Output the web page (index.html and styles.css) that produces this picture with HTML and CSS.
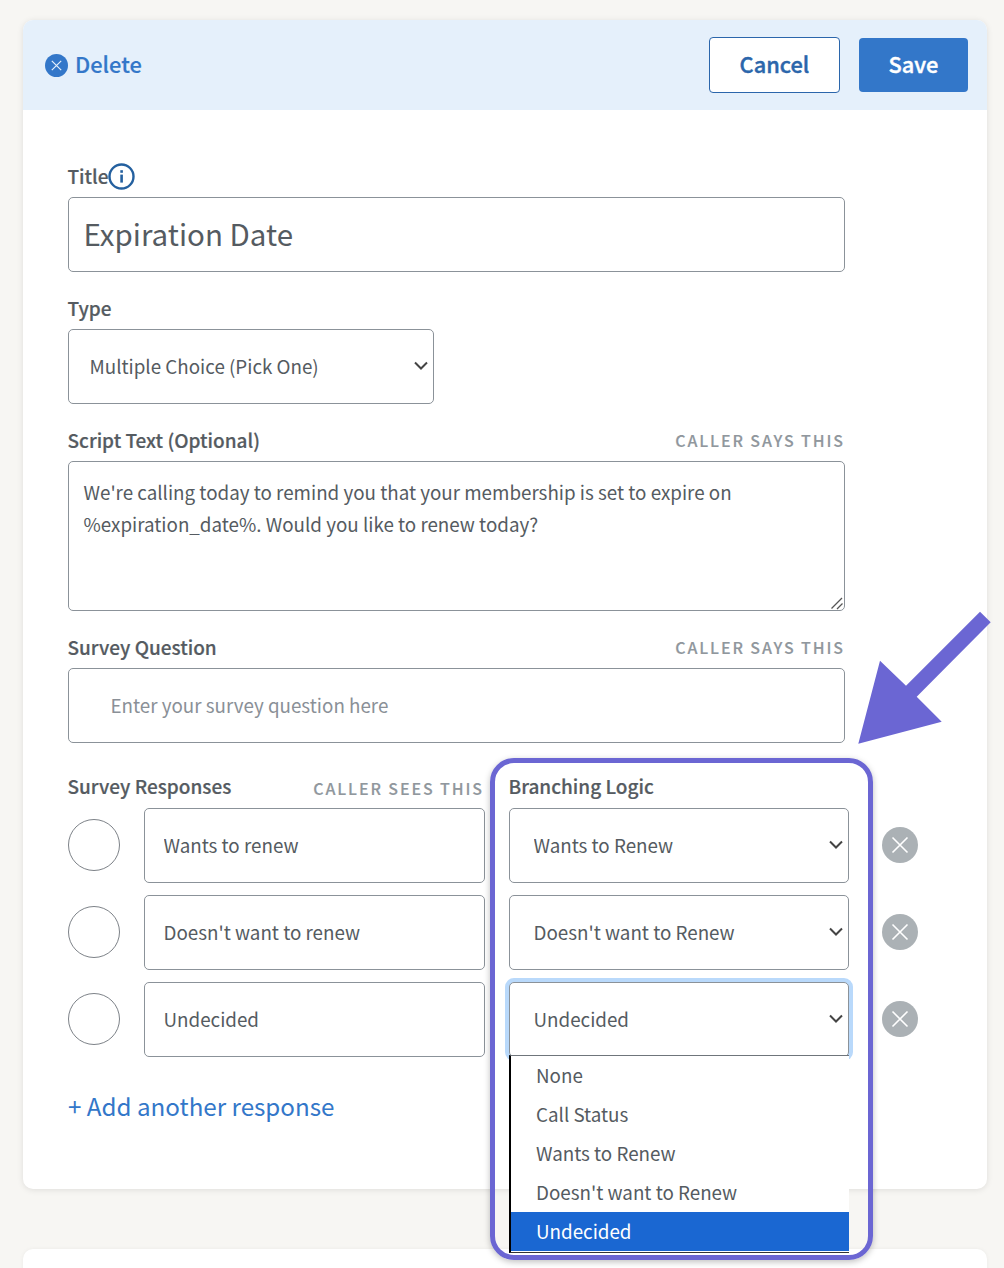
FILE: index.html
```html
<!DOCTYPE html>
<html lang="en">
<head>
<meta charset="utf-8">
<title>Survey question editor</title>
<link rel="stylesheet" href="styles.css">
</head>
<body>
<main class="card">
  <header class="bar">
    <a class="delete" href="#">
      <svg class="delete-icon" viewBox="0 0 23 23" aria-hidden="true"><circle cx="11.5" cy="11.5" r="11.5" fill="#3377c9"/><path d="M6.8 6.8l9.4 9.4M16.2 6.8l-9.4 9.4" stroke="#e5f0fb" stroke-width="1.2" fill="none"/></svg>
      <span class="delete-text">Delete</span>
    </a>
    <div class="actions">
      <button class="btn btn-outline" type="button">Cancel</button>
      <button class="btn btn-solid" type="button">Save</button>
    </div>
  </header>

  <form class="form">
    <div class="label-row">
      <label class="label">Title</label>
      <svg class="info" viewBox="0 0 27 27" aria-hidden="true"><circle cx="13.5" cy="13.5" r="12" fill="#fff" stroke="#24609f" stroke-width="2.4"/><rect x="12.300" y="11.600" width="2.600" height="8" fill="#24609f"/><rect x="12.300" y="7.200" width="2.600" height="2.600" fill="#24609f"/></svg>
    </div>
    <input class="field field-title" type="text" value="Expiration Date">

    <div class="label-row"><label class="label">Type</label></div>
    <select class="field field-type">
      <option>Multiple Choice (Pick One)</option>
    </select>

    <div class="label-row label-between"><label class="label">Script Text (Optional)</label><span class="hint">CALLER SAYS THIS</span></div>
    <div class="script-wrap">
      <textarea class="field field-script">We're calling today to remind you that your membership is set to expire on %expiration_date%. Would you like to renew today?</textarea>
      <svg class="grip" viewBox="0 0 14 14" aria-hidden="true"><path d="M1.500 12.500L12 2M7 13l5.500-5.500" stroke="#555" stroke-width="1.300" fill="none"/></svg>
    </div>

    <div class="label-row label-between"><label class="label">Survey Question</label><span class="hint">CALLER SAYS THIS</span></div>
    <input class="field field-question" type="text" placeholder="Enter your survey question here">

    <div class="responses">
      <div class="responses-head">
        <div class="label-row label-between col-response"><label class="label">Survey Responses</label><span class="hint hint-low">CALLER SEES THIS</span></div>
        <div class="label-row col-logic"><label class="label">Branching Logic</label></div>
      </div>

      <div class="response">
        <span class="radio"></span>
        <input class="field field-response" type="text" value="Wants to renew">
        <select class="field field-logic"><option>Wants to Renew</option></select>
        <span class="remove"><svg viewBox="0 0 36 36" aria-hidden="true"><path d="M10.500 10.500l15 15M25.500 10.500l-15 15" stroke="#fff" stroke-width="1.600" fill="none"/></svg></span>
      </div>
      <div class="response">
        <span class="radio"></span>
        <input class="field field-response" type="text" value="Doesn't want to renew">
        <select class="field field-logic"><option>Doesn't want to Renew</option></select>
        <span class="remove"><svg viewBox="0 0 36 36" aria-hidden="true"><path d="M10.500 10.500l15 15M25.500 10.500l-15 15" stroke="#fff" stroke-width="1.600" fill="none"/></svg></span>
      </div>
      <div class="response">
        <span class="radio"></span>
        <input class="field field-response" type="text" value="Undecided">
        <div class="logic-open">
          <select class="field field-logic field-focus"><option>Undecided</option></select>
          <ul class="menu">
            <li>None</li>
            <li>Call Status</li>
            <li>Wants to Renew</li>
            <li>Doesn't want to Renew</li>
            <li class="menu-selected">Undecided</li>
          </ul>
        </div>
        <span class="remove"><svg viewBox="0 0 36 36" aria-hidden="true"><path d="M10.500 10.500l15 15M25.500 10.500l-15 15" stroke="#fff" stroke-width="1.600" fill="none"/></svg></span>
      </div>
    </div>

    <a class="add" href="#">+ Add another response</a>
  </form>
</main>
<div class="card-next"></div>

<div class="highlight"></div>
<svg class="arrow" viewBox="0 0 134 134" aria-hidden="true"><path d="M122 .7L132.700 11.300 58.700 85.700 83.700 110.700 .3 132.700 22 49.700 48 74.700z" fill="#6b66d3"/></svg>
</body>
</html>
```
FILE: styles.css
```css
* { box-sizing: border-box; }
html, body { height: 100%; }
body {
  margin: 0;
  padding: 20px 17px 0 23px;
  background: #f7f6f3;
  font-family: "Noto Sans CJK JP", "Source Sans Pro", sans-serif;
  color: #555b61;
  overflow: hidden;
  position: relative;
}
.card {
  height: 1169px;
  background: #fff;
  border-radius: 10px;
  box-shadow: 0 1px 6px rgba(0, 0, 0, .1);
}
.card-next {
  height: 40px;
  margin-top: 60px;
  background: #fff;
  border-radius: 10px 10px 0 0;
  box-shadow: 0 0 4px rgba(0, 0, 0, .05);
}
.bar {
  height: 90px;
  padding: 0 19px 0 22px;
  display: flex;
  align-items: center;
  justify-content: space-between;
  background: #e5f0fb;
  border-radius: 10px 10px 0 0;
}
.delete {
  display: flex;
  align-items: center;
  gap: 7px;
  color: #3377c9;
  text-decoration: none;
  font-size: 21.800px;
  font-weight: 500;
  line-height: 30px;
  -webkit-text-stroke: .2px #3377c9;
}
.delete-text { padding-bottom: 3px; }
.delete-icon { width: 23px; height: 23px; }
.actions { display: flex; gap: 19px; align-items: center; }
.btn {
  font: inherit;
  font-size: 21.800px;
  font-weight: 500;
  line-height: 30px;
  border-radius: 4px;
  padding: 0 0 3px;
  -webkit-text-stroke: .4px currentColor;
}
.btn-outline {
  width: 131px;
  height: 56px;
  background: #fff;
  color: #2b66ab;
  border: 1px solid #2b66ab;
}
.btn-solid {
  width: 109px;
  height: 54px;
  background: #3377c9;
  color: #fff;
  border: 0;
}
.form { padding: 54px 0 0 45px; width: 822px; position: relative; }
.label-row {
  display: flex;
  align-items: center;
  height: 26px;
  margin-bottom: 7px;
}
.label-between { justify-content: space-between; }
.label {
  font-size: 19px;
  font-weight: 500;
  line-height: 26px;
  color: #555b61;
  padding-bottom: 2px;
  margin-left: -.5px;
  -webkit-text-stroke: .2px #555b61;
}
.info { width: 27px; height: 27px; margin-left: -1px; margin-top: -1px; }
.hint {
  font-size: 16px;
  font-weight: 500;
  line-height: 22px;
  letter-spacing: 1.900px;
  color: #90979d;
  padding-bottom: 2px;
  -webkit-text-stroke: .15px #90979d;
}
.hint-low { padding-bottom: 0; padding-top: 1px; }
.field {
  display: block;
  font: inherit;
  color: #555b61;
  background: #fff;
  border: 1px solid #8b9299;
  border-radius: 5px;
  outline: none;
}
select.field {
  appearance: none;
  -webkit-appearance: none;
  background: #fff url("data:image/svg+xml,%3Csvg xmlns='http://www.w3.org/2000/svg' width='14' height='9' viewBox='0 0 14 9'%3E%3Cpath d='M1 1.500l6 6 6-6' fill='none' stroke='%23444' stroke-width='2'/%3E%3C/svg%3E") no-repeat right 5px top 31px;
}
.field-title {
  width: 777px;
  height: 75px;
  padding: 0 15px 4px 14.500px;
  font-size: 29.500px;
  margin-bottom: 24px;
}
.field-type {
  width: 366px;
  height: 75px;
  padding: 0 21px 2px 20.500px;
  font-size: 18.800px;
  margin-bottom: 24px;
}
.script-wrap {
  position: relative;
  width: 777px;
  height: 150px;
  margin-bottom: 24px;
}
.field-script {
  width: 777px;
  height: 150px;
  padding: 14px 15px 16px 14.500px;
  font-size: 18.800px;
  line-height: 32px;
  resize: none;
}
.grip {
  position: absolute;
  right: 1px;
  bottom: 1px;
  width: 14px;
  height: 14px;
}
.field-question {
  width: 777px;
  height: 75px;
  padding: 0 42px 2px 41.500px;
  font-size: 18.800px;
  margin-bottom: 31px;
}
.field-question::placeholder { color: #8a9097; opacity: 1; }
.responses { width: 850px; }
.responses-head { display: flex; }
.col-response { width: 416px; margin-bottom: 8px; }
.col-logic { margin-left: 25px; margin-bottom: 8px; }
.response {
  display: flex;
  align-items: center;
  height: 75px;
  margin-bottom: 12px;
}
.radio {
  width: 52px;
  height: 52px;
  border: 1px solid #7d8288;
  border-radius: 50%;
  flex: none;
  margin: 0 24px 2px 0;
}
.field-response {
  width: 341px;
  height: 75px;
  padding: 0 19px 2px 18.500px;
  font-size: 18.800px;
  flex: none;
  margin-right: 24px;
}
.field-logic {
  width: 340px;
  height: 75px;
  padding: 0 24px 2px 23.500px;
  font-size: 18.800px;
  flex: none;
}
.logic-open { position: relative; width: 340px; height: 75px; flex: none; }
.field-focus { box-shadow: 0 0 0 4px #b9d9fb; }
.menu {
  position: absolute;
  left: 0;
  top: 73px;
  width: 340px;
  margin: 0;
  padding: 0 0 1px;
  list-style: none;
  background: #fff;
  border-left: 2.500px solid #000;
  border-top: 1px solid #6f757b;
  border-bottom: 1px solid #333;
  font-size: 18.800px;
}
.menu li {
  height: 39px;
  line-height: 37px;
  padding-left: 25px;
}
.menu .menu-selected { background: #1a67d2; color: #fff; }
.remove {
  width: 36px;
  height: 36px;
  margin: 0 0 2px 33px;
  background: #abb1b5;
  border-radius: 50%;
  flex: none;
  display: block;
}
.remove svg { display: block; width: 36px; height: 36px; }
.add {
  display: block;
  margin-top: 31px;
  color: #3377c9;
  font-size: 24.200px;
  line-height: 36px;
  text-decoration: none;
}
.highlight {
  position: absolute;
  left: 490px;
  top: 758px;
  width: 383px;
  height: 502px;
  border: 5px solid #6b66d3;
  border-radius: 24px;
  box-shadow: 0 2px 6px rgba(0, 0, 0, .25);
}
.arrow {
  position: absolute;
  left: 858px;
  top: 611px;
  width: 134px;
  height: 134px;
}
```
